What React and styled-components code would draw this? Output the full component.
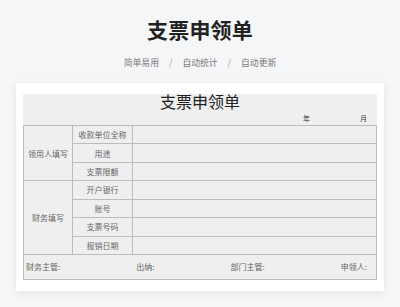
import styled, { createGlobalStyle } from 'styled-components';

const GlobalStyle = createGlobalStyle`
  html, body {
    margin: 0;
    padding: 0;
    background: #f5f6f8;
  }
  body {
    font-family: "Noto Sans CJK SC", "Noto Sans", sans-serif;
  }
`;

const applicantRows = ['收款单位全称', '用途', '支票限额'];
const financeRows = ['开户银行', '账号', '支票号码', '报销日期'];
const signers = ['财务主管:', '出纳:', '部门主管:', '申领人:'];

const App = () => {
  return (
    <StPage>
      <GlobalStyle />
      <StHeader>
        <StTitle>支票申领单</StTitle>
        <StTags>
          <span>简单易用</span>
          <StSlash>/</StSlash>
          <span>自动统计</span>
          <StSlash>/</StSlash>
          <span>自动更新</span>
        </StTags>
      </StHeader>

      <StCard>
        <StSheet>
          <StSheetTitle>支票申领单</StSheetTitle>
          <StDateLine>
            <span>年</span>
            <span>月</span>
          </StDateLine>

          <StGrid>
            <StGroupCell $start={1} $span={3}>领用人填写</StGroupCell>
            {applicantRows.map((label) => (
              <Row key={label} label={label} />
            ))}
            <StGroupCell $start={4} $span={4}>财务填写</StGroupCell>
            {financeRows.map((label) => (
              <Row key={label} label={label} />
            ))}
          </StGrid>

          <StFooter>
            {signers.map((s) => (
              <span key={s}>{s}</span>
            ))}
          </StFooter>
        </StSheet>
      </StCard>
    </StPage>
  );
};

const Row = ({ label }) => (
  <>
    <StLabelCell>{label}</StLabelCell>
    <StValueCell />
  </>
);

export default App;

const StPage = styled.div`
  width: 400px;
  height: 307px;
  overflow: hidden;
`;

const StHeader = styled.div`
  display: flex;
  flex-direction: column;
  align-items: center;
  padding-top: 17px;
`;

const StTitle = styled.h1`
  margin: 0;
  font-size: 21px;
  line-height: 24px;
  font-weight: 700;
  color: #222;
  letter-spacing: 0.2px;
`;

const StTags = styled.div`
  display: flex;
  align-items: center;
  gap: 10px;
  margin-top: 16px;
  font-size: 8.8px;
  line-height: 12px;
  color: #777;
`;

const StSlash = styled.span`
  color: #999;
`;

const StCard = styled.div`
  margin: 14px 16px 0;
  background: #fff;
  padding: 11px 7px 11px;
  box-shadow: 0 2px 8px rgba(0, 0, 0, 0.08);
`;

const StSheet = styled.div`
  background: #efefef;
  color: #666;
`;

const StSheetTitle = styled.div`
  text-align: center;
  font-size: 16px;
  line-height: 18px;
  color: #222;
  font-family: "Liberation Serif", "Noto Sans CJK SC", serif;
`;

const StDateLine = styled.div`
  display: flex;
  justify-content: flex-end;
  gap: 50px;
  padding-right: 10px;
  height: 13px;
  font-size: 7px;
  line-height: 12px;
  color: #333;
`;

const StGrid = styled.div`
  display: grid;
  grid-template-columns: 49px 60px 1fr;
  grid-template-rows: repeat(7, 18.43px);
  border-top: 1px solid #bcbcbc;
  border-left: 1px solid #bcbcbc;
  font-size: 8px;
`;

const StCell = styled.div`
  display: flex;
  align-items: center;
  justify-content: center;
  border-right: 1px solid #bcbcbc;
  border-bottom: 1px solid #bcbcbc;
  box-sizing: border-box;
`;

const StGroupCell = styled(StCell)`
  grid-column: 1;
  grid-row: ${(p) => p.$start} / span ${(p) => p.$span};
`;

const StLabelCell = styled(StCell)`
  grid-column: 2;
`;

const StValueCell = styled(StCell)`
  grid-column: 3;
`;

const StFooter = styled.div`
  display: flex;
  justify-content: space-between;
  align-items: center;
  height: 24px;
  padding: 0 9px 0 2px;
  border: 1px solid #bcbcbc;
  border-top: none;
  font-size: 8px;
`;
